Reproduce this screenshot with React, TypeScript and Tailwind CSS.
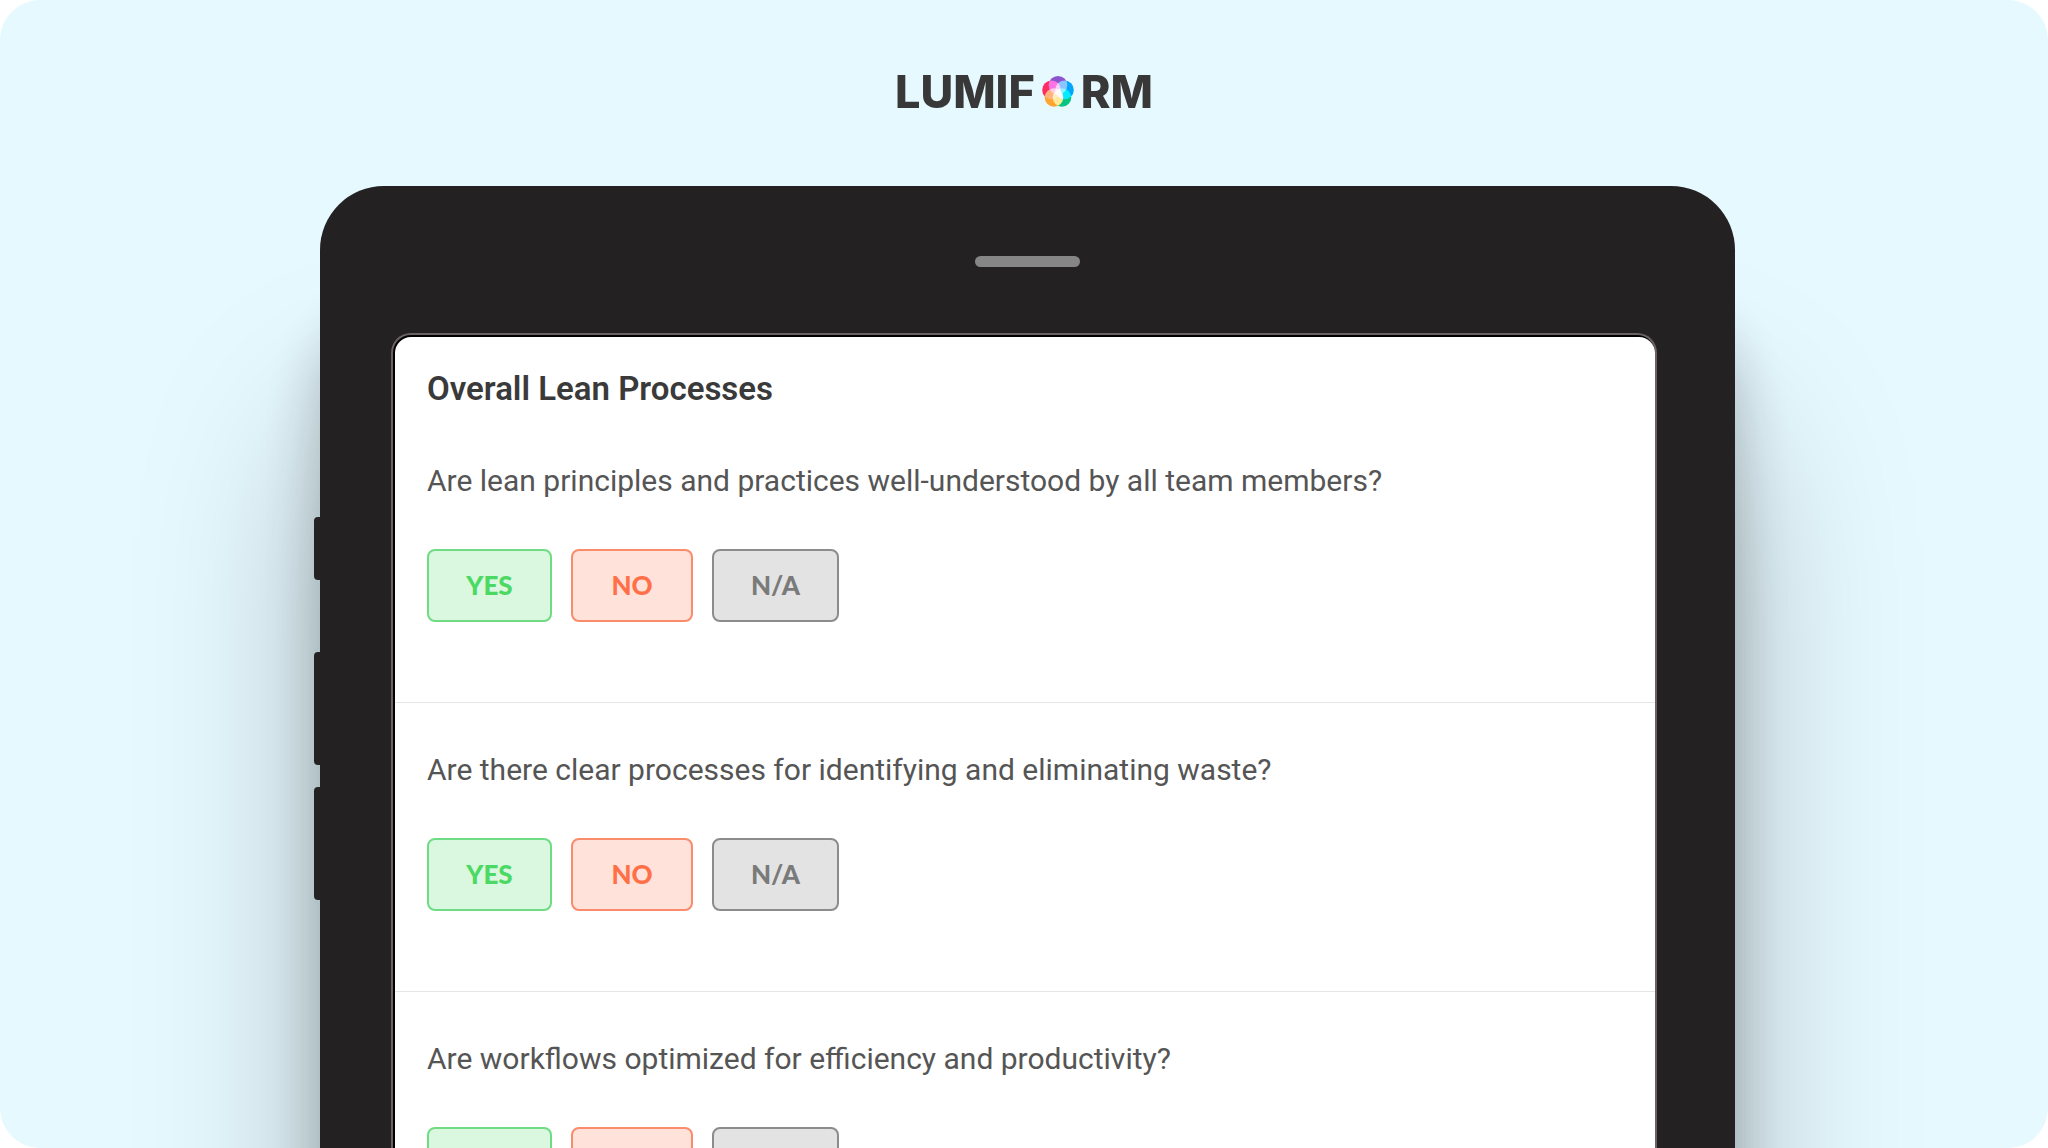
type Question = {
    id: number;
    text: string;
}

const questions: Question[] = [
    { id: 1, text: "Are lean principles and practices well-understood by all team members?" },
    { id: 2, text: "Are there clear processes for identifying and eliminating waste?" },
    { id: 3, text: "Are workflows optimized for efficiency and productivity?" },
];

const answers = [
    { label: "YES", style: "w-[125px] border-[#6fdc84] bg-[#daf7df] text-[#4bd964]" },
    { label: "NO", style: "w-[122px] border-[#fa8c6c] bg-[#ffe2da] text-[#ff7048]" },
    { label: "N/A", style: "w-[127px] border-[#8c8c8c] bg-[#e3e3e3] text-[#7a7a7a]" },
];

// five petals, overlaps go lighter towards the middle
const LogoMark = () => (
    <svg viewBox="-1 0 34 34" className="size-[34px]" aria-hidden="true">
        <g className="isolate">
            <circle className="mix-blend-screen" cx="16" cy="10.2" r="9.3" fill="#8c55cf" />
            <circle className="mix-blend-screen" cx="22.5" cy="14.9" r="9.3" fill="#00a6ff" />
            <circle className="mix-blend-screen" cx="20" cy="22.5" r="9.3" fill="#08c481" />
            <circle className="mix-blend-screen" cx="12" cy="22.5" r="9.3" fill="#ffa42e" />
            <circle className="mix-blend-screen" cx="9.5" cy="14.9" r="9.3" fill="#fb2e63" />
        </g>
    </svg>
)

const Logo = () => (
    <div className="flex items-center gap-1.5 font-[Inter,sans-serif] font-extrabold text-[45px] leading-[48px] text-[#383838]">
        <span>LUMIF</span>
        <LogoMark />
        <span>RM</span>
    </div>
)

const QuestionRow = ({ question }: { question: Question }) => (
    <div role="group" aria-labelledby={`question-${question.id}`} className="border-b border-[#e6e6e6] px-8 pt-[47px] pb-20">
        <p id={`question-${question.id}`} className="text-[30px] leading-10 text-[#555555]">{question.text}</p>
        <div className="mt-12 flex gap-[19px]">
            {answers.map((answer) => (
                <button
                    key={answer.label}
                    type="button"
                    className={`h-[73px] rounded-lg border-2 font-[Lato,sans-serif] font-black text-[26px] cursor-pointer ${answer.style}`}
                >
                    {answer.label}
                </button>
            ))}
        </div>
    </div>
)

const App = () => {
  return (
    <main className="h-screen overflow-hidden rounded-[40px] bg-[#e6f9ff] font-[Roboto,sans-serif]">
        <header className="flex justify-center pt-[68px]">
            <Logo />
        </header>
        <div className="mt-[70px] pl-80 pr-[313px]">
            <div className="relative rounded-t-[64px] bg-[#242122] shadow-[0_240px_180px_rgba(0,0,0,0.26),0_140px_60px_rgba(0,0,0,0.24)]">
                {/* side keys */}
                <span className="absolute -left-1.5 top-[331px] h-[63px] w-2 rounded-l-sm bg-[#242122]" />
                <span className="absolute -left-1.5 top-[466px] h-[113px] w-2 rounded-l-sm bg-[#242122]" />
                <span className="absolute -left-1.5 top-[601px] h-[113px] w-2 rounded-l-sm bg-[#242122]" />

                <div className="flex h-[147px] items-center justify-center pt-1">
                    <div className="h-[11px] w-[105px] rounded-full bg-[#868686]" />
                </div>
                <div className="ml-[71px] mr-[78px] rounded-t-[20px] border-2 border-b-0 border-[#6b6062] bg-black pl-0.5 pt-0.5">
                    <div className="rounded-t-[16px] bg-white pt-8">
                        <h1 className="mb-[5px] px-8 text-[33px] leading-10 font-semibold text-[#3a3a3a]">Overall Lean Processes</h1>
                        {questions.map((question) => (
                            <QuestionRow key={question.id} question={question} />
                        ))}
                    </div>
                </div>
            </div>
        </div>
    </main>
  )
}

export default App
